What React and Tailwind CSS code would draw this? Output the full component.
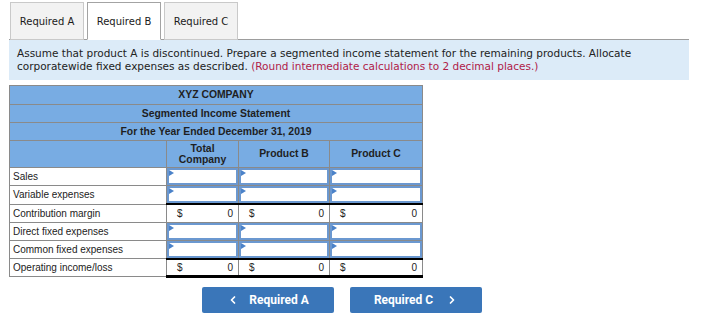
import { ChevronLeft, ChevronRight } from "lucide-react";

const rows = [
  { label: "Sales", kind: "input" },
  { label: "Variable expenses", kind: "input" },
  { label: "Contribution margin", kind: "total" },
  { label: "Direct fixed expenses", kind: "input" },
  { label: "Common fixed expenses", kind: "input" },
  { label: "Operating income/loss", kind: "final" },
];

function InputCell() {
  return (
    <td className="border border-[#8a8a8a] p-0">
      <div className="relative h-[17px] border-2 border-[#6b98d0] bg-white">
        <span className="absolute left-0 top-0 h-0 w-0 border-y-[3px] border-l-[5px] border-y-transparent border-l-[#4b82c9]" />
      </div>
    </td>
  );
}

function TotalCell({ final }) {
  return (
    <td
      className={`border border-[#8a8a8a] border-t-2 border-t-black px-[10px] ${
        final ? "border-b-[3px] border-b-black" : ""
      }`}
    >
      <div className="flex justify-between text-[10px] text-[#222]">
        <span>$</span>
        <span className="-mr-[5px]">0</span>
      </div>
    </td>
  );
}

function Tab({ active, children }) {
  return (
    <div
      className={`-mb-px flex h-[38px] w-[74px] items-center justify-center border text-[10px] text-[#1a1a1a] ${
        active ? "border-[#a3a3a3] border-b-white bg-white" : "border-[#c9c9c9] bg-[#f2f2f2]"
      }`}
    >
      {children}
    </div>
  );
}

export default function App() {
  return (
    <div className="h-[330px] w-[725px] bg-white font-['Liberation_Sans',Arial,sans-serif]">
      <div className="ml-[9px] w-[680px] border-b border-[#9d9d9d] pt-[2px] font-['DejaVu_Sans',Verdana,sans-serif]">
        <div className="flex gap-[3px] pl-[1px]">
          <Tab>Required A</Tab>
          <Tab active>Required B</Tab>
          <Tab>Required C</Tab>
        </div>
      </div>

      <div className="ml-[9px] h-[40px] w-[680px] whitespace-nowrap bg-[#dcebf8] px-[8px] pt-[7px] font-['DejaVu_Sans',Verdana,sans-serif] text-[10.5px] leading-[13px] text-[#222]">
        Assume that product A is discontinued. Prepare a segmented income statement for the remaining products. Allocate
        <br />
        corporatewide fixed expenses as described.{" "}
        <span className="text-[#b02048]">(Round intermediate calculations to 2 decimal places.)</span>
      </div>

      <table className="ml-[9px] mt-[5px] w-[413px] table-fixed border-collapse border border-[#8a8a8a]">
        <colgroup>
          <col className="w-[157px]" />
          <col className="w-[72px]" />
          <col className="w-[91px]" />
          <col className="w-[93px]" />
        </colgroup>
        <thead className="bg-[#78ace3] text-[10.4px] font-bold text-[#1f1f1f]">
          <tr className="h-[19px]">
            <th colSpan={4} className="border border-[#8a8a8a] text-center">XYZ COMPANY</th>
          </tr>
          <tr className="h-[18px]">
            <th colSpan={4} className="border border-[#8a8a8a] text-center">Segmented Income Statement</th>
          </tr>
          <tr className="h-[18px]">
            <th colSpan={4} className="border border-[#8a8a8a] text-center">For the Year Ended December 31, 2019</th>
          </tr>
          <tr className="h-[27px]">
            <th className="border border-[#8a8a8a]" />
            <th className="border border-[#8a8a8a] text-center leading-[11px]">
              Total
              <br />
              Company
            </th>
            <th className="border border-[#8a8a8a] text-center">Product B</th>
            <th className="border border-[#8a8a8a] text-center">Product C</th>
          </tr>
        </thead>
        <tbody>
          {rows.map((row) => (
            <tr key={row.label} className="h-[18px]">
              <td className="border border-[#8a8a8a] pl-[3px] text-[10px] text-[#222]">{row.label}</td>
              {row.kind === "input" ? (
                <>
                  <InputCell />
                  <InputCell />
                  <InputCell />
                </>
              ) : (
                <>
                  <TotalCell final={row.kind === "final"} />
                  <TotalCell final={row.kind === "final"} />
                  <TotalCell final={row.kind === "final"} />
                </>
              )}
            </tr>
          ))}
        </tbody>
      </table>

      <div className="ml-[202px] mt-[9px] flex gap-[16px] font-['Roboto',sans-serif] text-[12px] font-bold text-white">
        <button className="flex h-[26px] w-[132px] items-center justify-center gap-[10px] rounded-[2px] bg-[#3a76b9]">
          <ChevronLeft size={12} strokeWidth={3.5} />
          <span>Required A</span>
        </button>
        <button className="flex h-[26px] w-[132px] items-center justify-center gap-[13px] rounded-[2px] bg-[#3a76b9]">
          <span>Required C</span>
          <ChevronRight size={12} strokeWidth={3.5} />
        </button>
      </div>
    </div>
  );
}
